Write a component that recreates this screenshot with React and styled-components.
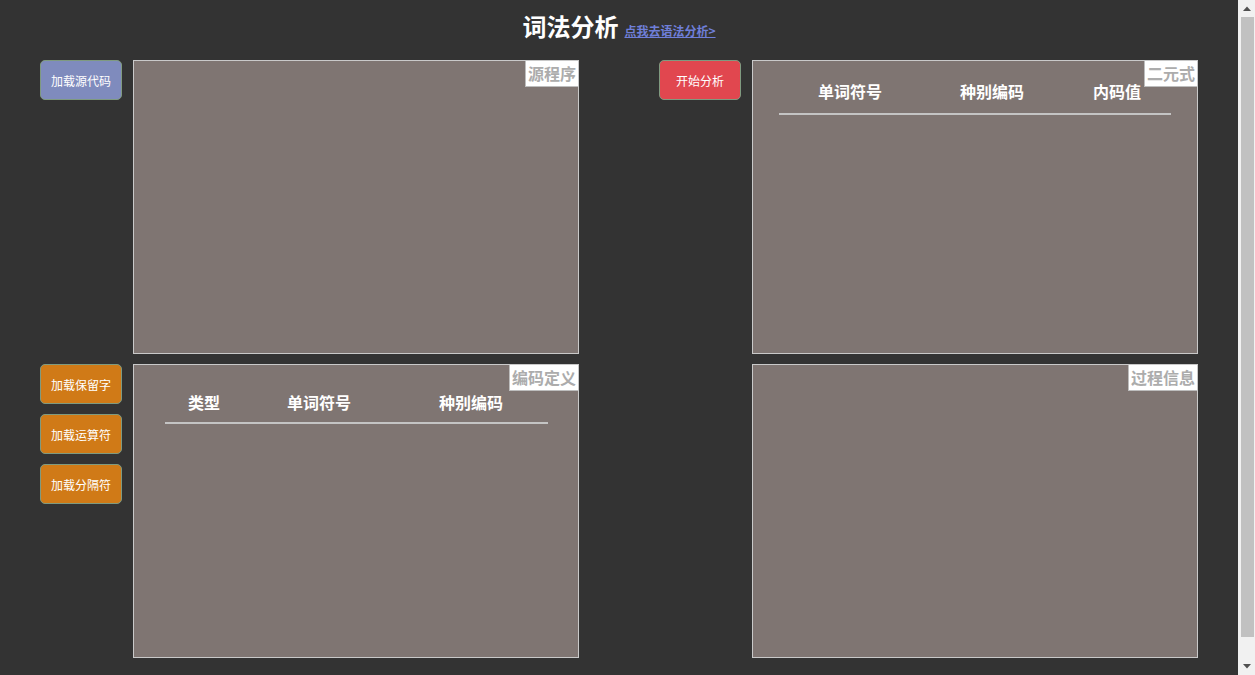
import React from 'react';
import styled, { createGlobalStyle } from 'styled-components';

const GlobalStyle = createGlobalStyle`
  html, body {
    margin: 0;
    padding: 0;
    background: #333333;
    font-family: "Noto Sans CJK SC", "Liberation Sans", sans-serif;
    overflow: hidden;
  }
`;

const Shell = styled.div`
  display: flex;
  height: 100vh;
`;

const Page = styled.div`
  flex: 1;
  padding: 6px 40px 32px;
`;

const ScrollTrack = styled.div`
  width: 17px;
  background: #f1f1f1;
  display: flex;
  flex-direction: column;
  align-items: center;
`;

const ArrowBox = styled.div`
  height: 17px;
  width: 17px;
  display: flex;
  align-items: center;
  justify-content: center;
`;

const Thumb = styled.div`
  width: 13px;
  margin-left: 1px;
  height: 620px;
  background: #c1c1c1;
`;

const Spacer = styled.div`
  flex: 1;
`;

const TitleRow = styled.div`
  height: 40px;
  margin-bottom: 14px;
  display: flex;
  justify-content: center;
  align-items: baseline;
  gap: 6px;
  line-height: 40px;
`;

const Title = styled.h1`
  margin: 0;
  font-size: 24px;
  font-weight: bold;
  color: #ffffff;
`;

const SwitchLink = styled.a`
  font-size: 12px;
  font-weight: bold;
  color: #6f7fd9;
  text-decoration: underline;
`;

const Grid = styled.div`
  display: grid;
  grid-template-columns: 539px 539px;
  justify-content: space-between;
  row-gap: 10px;
`;

const Group = styled.div`
  display: flex;
  gap: 11px;
`;

const ButtonColumn = styled.div`
  width: 82px;
  display: flex;
  flex-direction: column;
  gap: 10px;
`;

const ActionButton = styled.button`
  width: 82px;
  height: 40px;
  padding: 0;
  border: 1px solid #7f9a80;
  border-radius: 5px;
  background: ${p => p.color};
  color: #ffffff;
  font-family: "Noto Sans CJK SC", sans-serif;
  font-size: 12px;
  cursor: pointer;
`;

const Panel = styled.div`
  position: relative;
  box-sizing: border-box;
  width: 446px;
  height: 294px;
  background: #7f7572;
  border: 1px solid #c9c9c9;
  padding-top: ${p => p.top || 0}px;
`;

const Tag = styled.span`
  position: absolute;
  top: 0;
  right: 0;
  height: 26px;
  padding: 0 2px;
  box-sizing: border-box;
  background: #ffffff;
  border-left: 1px solid #bdbdbd;
  border-bottom: 1px solid #bdbdbd;
  color: #acacac;
  font-size: 16px;
  font-weight: bold;
  line-height: 25px;
`;

const Header = styled.div`
  margin: 0 auto;
  width: ${p => p.width}px;
  display: grid;
  grid-template-columns: ${p => p.cols};
  border-bottom: 2px solid #c4c4c4;
  padding-bottom: ${p => p.gap}px;
`;

const HeadCell = styled.div`
  text-align: center;
  color: #ffffff;
  font-size: 16px;
  font-weight: bold;
  line-height: 22px;
`;

const Arrow = ({ down }) => (
  <svg width="8" height="5" viewBox="0 0 8 5">
    <path d={down ? 'M0 0H8L4 4.5Z' : 'M4 0.5L8 5H0Z'} fill="#505050" />
  </svg>
);

export default function App() {
  return (
    <Shell>
      <GlobalStyle />
      <Page>
        <TitleRow>
          <Title>词法分析</Title>
          <SwitchLink href="#">点我去语法分析&gt;</SwitchLink>
        </TitleRow>
        <Grid>
          <Group>
            <ButtonColumn>
              <ActionButton color="#7f8bbd">加载源代码</ActionButton>
            </ButtonColumn>
            <Panel>
              <Tag>源程序</Tag>
            </Panel>
          </Group>
          <Group>
            <ButtonColumn>
              <ActionButton color="#e1474f">开始分析</ActionButton>
            </ButtonColumn>
            <Panel top={19}>
              <Tag>二元式</Tag>
              <Header width={392} cols="142px 142px 1fr" gap={11}>
                <HeadCell>单词符号</HeadCell>
                <HeadCell>种别编码</HeadCell>
                <HeadCell>内码值</HeadCell>
              </Header>
            </Panel>
          </Group>
          <Group>
            <ButtonColumn>
              <ActionButton color="#d07a17">加载保留字</ActionButton>
              <ActionButton color="#d07a17">加载运算符</ActionButton>
              <ActionButton color="#d07a17">加载分隔符</ActionButton>
            </ButtonColumn>
            <Panel top={26}>
              <Tag>编码定义</Tag>
              <Header width={383} cols="79px 151px 1fr" gap={9}>
                <HeadCell>类型</HeadCell>
                <HeadCell>单词符号</HeadCell>
                <HeadCell>种别编码</HeadCell>
              </Header>
            </Panel>
          </Group>
          <Group>
            <ButtonColumn />
            <Panel>
              <Tag>过程信息</Tag>
            </Panel>
          </Group>
        </Grid>
      </Page>
      <ScrollTrack>
        <ArrowBox><Arrow /></ArrowBox>
        <Thumb />
        <Spacer />
        <ArrowBox><Arrow down /></ArrowBox>
      </ScrollTrack>
    </Shell>
  );
}
